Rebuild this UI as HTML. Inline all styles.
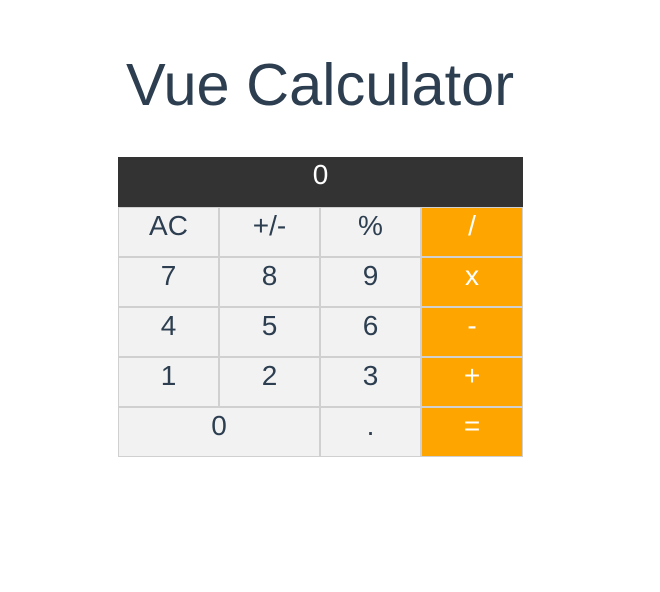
<!DOCTYPE html>
<html><head><style>
html,body{margin:0;padding:0;background:#fff;}
body{width:660px;height:592px;font-family:"Liberation Sans",Arial,sans-serif;color:#2c3e50;position:relative;}
h1{position:absolute;left:0;width:640px;top:50px;margin:0;text-align:center;font-weight:normal;font-size:59.5px;line-height:70px;}
.calc{position:absolute;left:118px;top:157px;width:405px;display:grid;grid-template-columns:101px 101px 101px 102px;grid-auto-rows:50px;font-size:28px;}
.display{grid-column:1/5;background:#333;color:#fff;text-align:center;line-height:36px;font-size:28px;}
.b{background:#f2f2f2;border:1px solid #d0d0d0;text-align:center;line-height:36px;box-sizing:border-box;}
.o{background:#ffa500;color:#fff;}
.z{grid-column:1/3;}
</style></head><body>
<h1>Vue Calculator</h1>
<div class="calc">
<div class="display">0</div>
<div class="b">AC</div><div class="b">+/-</div><div class="b">%</div><div class="b o">/</div>
<div class="b">7</div><div class="b">8</div><div class="b">9</div><div class="b o">x</div>
<div class="b">4</div><div class="b">5</div><div class="b">6</div><div class="b o">-</div>
<div class="b">1</div><div class="b">2</div><div class="b">3</div><div class="b o">+</div>
<div class="b z">0</div><div class="b">.</div><div class="b o">=</div>
</div>
</body></html>
